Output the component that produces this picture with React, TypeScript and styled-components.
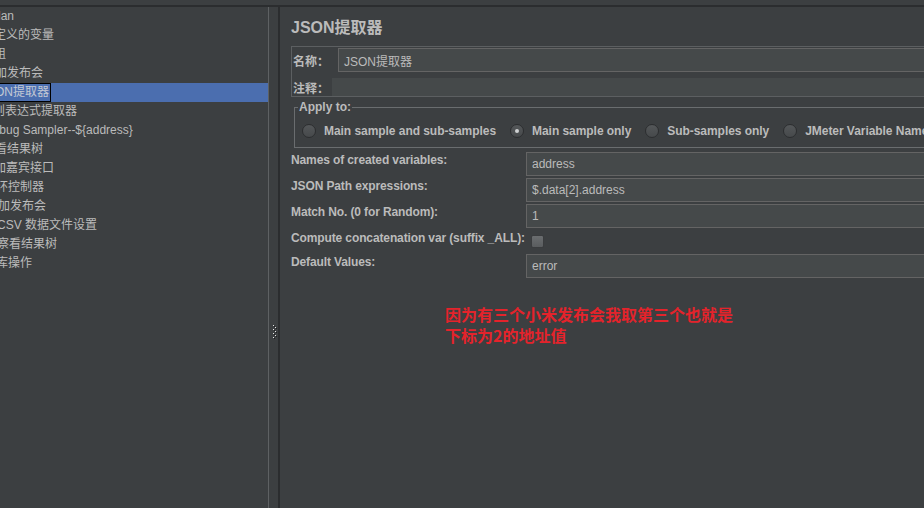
import React from 'react';
import styled, { createGlobalStyle } from 'styled-components';

const GlobalStyle = createGlobalStyle`
  html, body { margin: 0; padding: 0; background: #3c3f41; overflow: hidden; }
  body {
    font-family: "Liberation Sans", "Noto Sans CJK SC", sans-serif;
    font-size: 12px;
    color: #bbbbbb;
  }
`;

const Page = styled.div`
  width: 924px;
  height: 508px;
  padding-top: 5px;
  box-sizing: border-box;
  background: #3c3f41;
  overflow: hidden;
`;

const Main = styled.div`
  display: flex;
  height: 503px;
  border-top: 2px solid #2b2d2f;
  box-sizing: border-box;
  overflow: hidden;
`;

const TreePanel = styled.div`
  flex: 0 0 268px;
  border-right: 1px solid #5e6163;
  overflow: hidden;
  display: flex;
  flex-direction: column;
`;

const TreeRow = styled.div<{ $selected?: boolean }>`
  height: 19px;
  flex: 0 0 19px;
  display: flex;
  align-items: center;
  white-space: nowrap;
  background: ${(p) => (p.$selected ? '#4b6eaf' : 'transparent')};
`;

const TreeLabel = styled.span<{ $shift: number; $selected?: boolean }>`
  margin-left: ${(p) => p.$shift}px;
  padding: 0 1px;
  line-height: 17px;
  border: 1px solid ${(p) => (p.$selected ? '#000000' : 'transparent')};
  color: ${(p) => (p.$selected ? '#c3c9d4' : '#bbbbbb')};
`;

const Splitter = styled.div`
  flex: 0 0 9px;
  display: flex;
  align-items: flex-start;
  padding: 318px 0 0 4px;
  box-sizing: border-box;
`;

const EditorPanel = styled.div`
  flex: 1 0 700px;
  border-left: 2px solid #2b2d2f;
  padding: 9px 0 0 11px;
  display: flex;
  flex-direction: column;
  overflow: hidden;
`;

const Title = styled.div`
  font-size: 16px;
  font-weight: bold;
  line-height: 24px;
  height: 24px;
  color: #bbbbbb;
`;

const NameBox = styled.div`
  margin-top: 6px;
  border: 1px solid #5c5f61;
  border-right: none;
  padding: 1px 0 0 1px;
  display: flex;
  flex-direction: column;
`;

const NameRow = styled.div<{ $gap?: number }>`
  display: flex;
  align-items: center;
  margin-top: ${(p) => p.$gap ?? 0}px;
`;

const BoxLabel = styled.span<{ $width: number }>`
  flex: 0 0 ${(p) => p.$width}px;
  font-weight: bold;
  font-size: 12px;
  color: #bbbbbb;
`;

const TextField = styled.div`
  flex: 1;
  height: 24px;
  box-sizing: border-box;
  border: 1px solid #646464;
  border-right: none;
  background: #45494a;
  padding-left: 5px;
  display: flex;
  align-items: center;
  color: #bbbbbb;
  white-space: nowrap;
`;

const CommentField = styled.div`
  flex: 1;
  height: 18px;
  background: #45494a;
`;

const ApplyBox = styled.fieldset`
  margin: 3px 0 0 3px;
  padding: 0 0 4px 3px;
  min-width: 0;
  border: 1px solid #6a6d6f;
  border-right: none;
`;

const ApplyLegend = styled.legend`
  padding: 0 1px;
  font-weight: bold;
  font-size: 12px;
  line-height: 14px;
  color: #bbbbbb;
`;

const RadioGroup = styled.div`
  display: flex;
  align-items: center;
  height: 24px;
  margin-top: 5px;
  padding-left: 4px;
  white-space: nowrap;
`;

const RadioItem = styled.label`
  display: flex;
  align-items: center;
  gap: 8px;
  margin-right: 14px;
  font-weight: bold;
  letter-spacing: -0.05px;
  color: #bbbbbb;
`;

const RadioDot = styled.span<{ $checked?: boolean }>`
  position: relative;
  width: 14px;
  height: 14px;
  box-sizing: border-box;
  border-radius: 50%;
  border: 1px solid #2c2e30;
  background: linear-gradient(#545759, #46494b);
  &::after {
    content: '';
    display: ${(p) => (p.$checked ? 'block' : 'none')};
    position: absolute;
    left: 4px;
    top: 4px;
    width: 4px;
    height: 4px;
    border-radius: 50%;
    background: #cfd1d3;
  }
`;

const FormGrid = styled.div`
  margin-top: 4px;
  display: grid;
  grid-template-columns: 235px 1fr;
  grid-template-rows: 24px 24px 24px 22px 24px;
  row-gap: 2px;
`;

const FormLabel = styled.div`
  align-self: start;
  line-height: 16px;
  font-weight: bold;
  letter-spacing: -0.12px;
  color: #bbbbbb;
  white-space: nowrap;
`;

const CheckCell = styled.div`
  display: flex;
  align-items: center;
  padding-left: 5px;
`;

const CheckBox = styled.span`
  width: 13px;
  height: 13px;
  box-sizing: border-box;
  border: 1px solid #3a3c3e;
  border-radius: 2px;
  background: linear-gradient(#6a6d6f, #5a5d5f);
`;

const Annotation = styled.div`
  margin: 26px 0 0 154px;
  font-family: "Noto Sans CJK SC", sans-serif;
  font-size: 16px;
  font-weight: bold;
  line-height: 21px;
  color: #e4232b;
`;

const AnnotationLine = styled.div`
  white-space: nowrap;
`;

const treeRows: { text: string; shift: number; selected?: boolean }[] = [
  { text: 'Plan', shift: -12 },
  { text: '定义的变量', shift: -8 },
  { text: '组', shift: -8 },
  { text: '加发布会', shift: -7 },
  { text: 'JSON提取器', shift: -21, selected: true },
  { text: '则表达式提取器', shift: -9 },
  { text: 'Debug Sampler--${address}', shift: -18 },
  { text: '察看结果树', shift: -19 },
  { text: '添加嘉宾接口', shift: -20 },
  { text: '循环控制器', shift: -18 },
  { text: '添加发布会', shift: -16 },
  { text: 'CSV 数据文件设置', shift: -5 },
  { text: '察看结果树', shift: -5 },
  { text: '数据库操作', shift: -30 },
];

const GripDots = () => (
  <svg width="5" height="15" viewBox="0 0 5 15">
    {Array.from({ length: 7 }).map((_, i) => {
      const x = i % 2 === 0 ? 0 : 2;
      return (
        <g key={i}>
          <rect x={x} y={i * 2} width="1" height="1" fill="#e6e6e6" />
          <rect x={x + 1} y={i * 2 + 1} width="1" height="1" fill="#1e1f20" />
        </g>
      );
    })}
  </svg>
);

export default function App() {
  return (
    <Page>
      <GlobalStyle />
      <Main>
        <TreePanel>
          {treeRows.map((r, i) => (
            <TreeRow key={i} $selected={r.selected}>
              <TreeLabel $shift={r.shift} $selected={r.selected}>
                {r.text}
              </TreeLabel>
            </TreeRow>
          ))}
        </TreePanel>
        <Splitter>
          <GripDots />
        </Splitter>
        <EditorPanel>
          <Title>JSON提取器</Title>
          <NameBox>
            <NameRow>
              <BoxLabel $width={45}>名称：</BoxLabel>
              <TextField>JSON提取器</TextField>
            </NameRow>
            <NameRow $gap={6}>
              <BoxLabel $width={39}>注释：</BoxLabel>
              <CommentField />
            </NameRow>
          </NameBox>
          <ApplyBox>
            <ApplyLegend>Apply to:</ApplyLegend>
            <RadioGroup>
              <RadioItem>
                <RadioDot />
                Main sample and sub-samples
              </RadioItem>
              <RadioItem>
                <RadioDot $checked />
                Main sample only
              </RadioItem>
              <RadioItem>
                <RadioDot />
                Sub-samples only
              </RadioItem>
              <RadioItem>
                <RadioDot />
                JMeter Variable Name to use
              </RadioItem>
            </RadioGroup>
          </ApplyBox>
          <FormGrid>
            <FormLabel>Names of created variables:</FormLabel>
            <TextField>address</TextField>
            <FormLabel>JSON Path expressions:</FormLabel>
            <TextField>$.data[2].address</TextField>
            <FormLabel>Match No. (0 for Random):</FormLabel>
            <TextField>1</TextField>
            <FormLabel>Compute concatenation var (suffix _ALL):</FormLabel>
            <CheckCell>
              <CheckBox />
            </CheckCell>
            <FormLabel>Default Values:</FormLabel>
            <TextField>error</TextField>
          </FormGrid>
          <Annotation>
            <AnnotationLine>因为有三个小米发布会我取第三个也就是</AnnotationLine>
            <AnnotationLine>下标为2的地址值</AnnotationLine>
          </Annotation>
        </EditorPanel>
      </Main>
    </Page>
  );
}
